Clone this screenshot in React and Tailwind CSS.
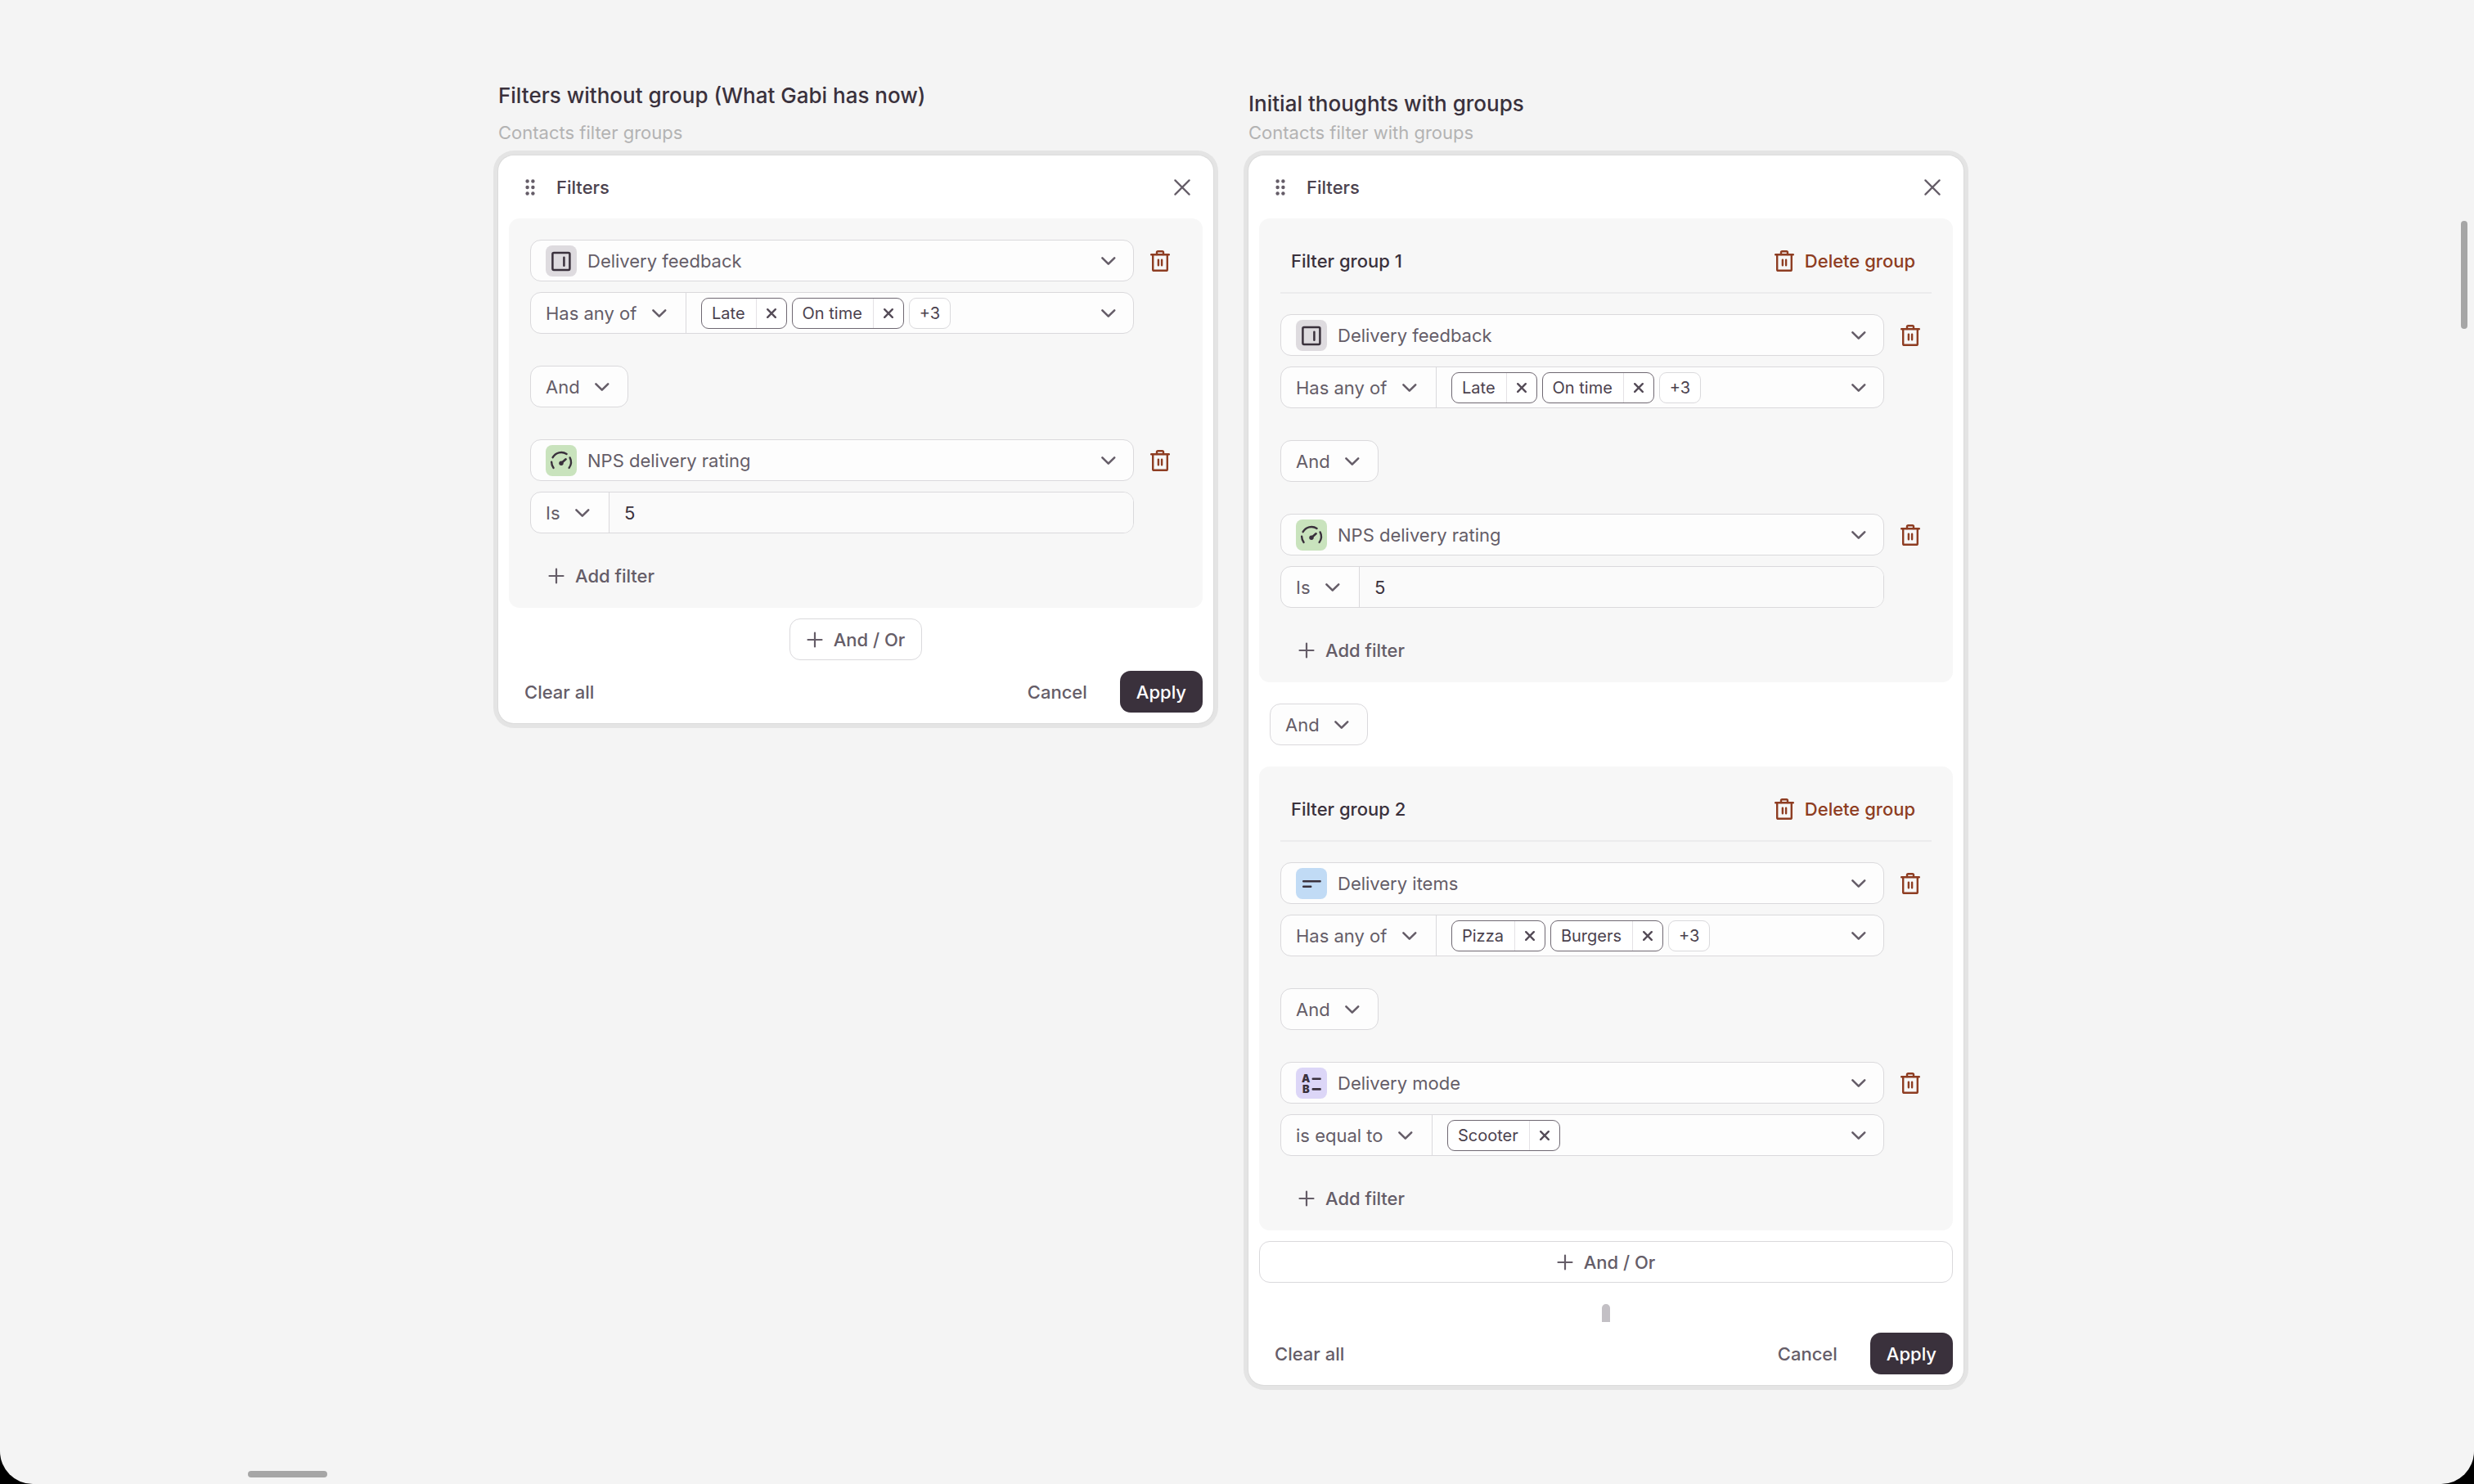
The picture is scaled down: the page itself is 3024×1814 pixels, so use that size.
import React, { useState } from 'react';

const ChevronIcon = () => (
  <svg className="pointer-events-none size-6 shrink-0" viewBox="0 0 24 24" fill="none" stroke="#655d68" strokeWidth="2.6" strokeLinecap="round" strokeLinejoin="round">
    <path d="M4.4 8.4l7.4 7.2 7.4-7.2" />
  </svg>
);

const PlusIcon = () => (
  <svg className="size-5 shrink-0" viewBox="0 0 20 20" fill="none" stroke="#655d68" strokeWidth="2.2" strokeLinecap="round">
    <path d="M10 1.5v17M1.5 10h17" />
  </svg>
);

const CloseIcon = () => (
  <svg className="size-5 shrink-0" viewBox="0 0 20 20" fill="none" stroke="#655d68" strokeWidth="2.2" strokeLinecap="round">
    <path d="M1.4 1.4l17.2 17.2M18.6 1.4L1.4 18.6" />
  </svg>
);

const SmallCloseIcon = () => (
  <svg className="size-3 shrink-0" viewBox="0 0 12 12" fill="none" stroke="#554c58" strokeWidth="2.4" strokeLinecap="round">
    <path d="M1.2 1.2l9.6 9.6M10.8 1.2l-9.6 9.6" />
  </svg>
);

const TrashIcon = () => (
  <svg className="h-[26px] w-6 shrink-0" viewBox="0 0 24 26" fill="none" stroke="#8e3d22" strokeWidth="2.4" strokeLinecap="round" strokeLinejoin="round">
    <path d="M1.2 5.2h21.6" />
    <path d="M8 5V2.6c0-.8.6-1.4 1.4-1.4h5.2c.8 0 1.4.6 1.4 1.4V5" />
    <path d="M3.2 5.2v18.2c0 .8.6 1.4 1.4 1.4h14.8c.8 0 1.4-.6 1.4-1.4V5.2" />
    <path d="M9.9 11.6v6.6M14.1 11.6v6.6" />
  </svg>
);

const DragIcon = () => (
  <svg className="h-5 w-3 shrink-0" viewBox="0 0 12 20" fill="#655d68">
    <circle cx="2.6" cy="2.5" r="2.2" />
    <circle cx="9.4" cy="2.5" r="2.2" />
    <circle cx="2.6" cy="10" r="2.2" />
    <circle cx="9.4" cy="10" r="2.2" />
    <circle cx="2.6" cy="17.5" r="2.2" />
    <circle cx="9.4" cy="17.5" r="2.2" />
  </svg>
);

// Coloured 38px tiles that show the type of a field
const fieldIcons = {
  panel: (
    <svg className="size-[38px] shrink-0 rounded-lg bg-[#dedbdf]" viewBox="0 0 38 38" fill="none" stroke="#3a313c" strokeWidth="2.5" strokeLinecap="round" strokeLinejoin="round">
      <rect x="8.4" y="8.9" width="21" height="21" rx="1.6" />
      <path d="M22.4 14.8v10" />
    </svg>
  ),
  gauge: (
    <svg className="size-[38px] shrink-0 rounded-lg bg-[#c9e3bd]" viewBox="0 0 38 38" fill="none" stroke="#3a313c" strokeWidth="2.4" strokeLinecap="round">
      <path d="M8.6 15.2A12 12 0 0 1 25.6 10.9" />
      <path d="M7.1 20.6A12 12 0 0 0 9.6 27.9" />
      <path d="M29.6 15.4A12 12 0 0 1 28.6 27.9" />
      <path d="M19 22.3l5.6-5" strokeWidth="2.6" />
      <circle cx="19" cy="22.3" r="2.7" fill="#3a313c" stroke="none" />
    </svg>
  ),
  text: (
    <svg className="size-[38px] shrink-0 rounded-lg bg-[#c1dbf5]" viewBox="0 0 38 38" fill="none" stroke="#3a313c" strokeWidth="2.5" strokeLinecap="round">
      <path d="M9.2 16.3h20.4M9.2 22.7h9" />
    </svg>
  ),
  choice: (
    <svg className="size-[38px] shrink-0 rounded-lg bg-[#dcd6f7]" viewBox="0 0 38 38" fill="none" stroke="#3a313c" strokeWidth="2.6" strokeLinecap="round">
      <path d="M20.8 13.8h8.8M20.8 26.4h8.8" />
      <g className="font-[Inter,sans-serif] text-[13px] font-black" fill="#3a313c" stroke="none" textAnchor="middle">
        <text x="12.2" y="18">A</text>
        <text x="12.4" y="31">B</text>
      </g>
    </svg>
  ),
};

const Select = ({ label, value, className = '' }) => (
  <select
    aria-label={label}
    defaultValue={value}
    className={`h-full cursor-pointer appearance-none bg-transparent text-[#655d68] outline-none ${className}`}
  >
    <option>{value}</option>
  </select>
);

const Conjunction = () => (
  <div className="flex h-[51px] w-fit items-center gap-[15px] rounded-[13px] border border-[#dad9dc] bg-[#fdfdfd] pr-[19px] pl-[18px]">
    <Select label="Combine with" value="And" />
    <ChevronIcon />
  </div>
);

const Chip = ({ label, onRemove }) => (
  <span className="flex h-[38px] items-stretch rounded-[9px] border border-[#6f6872] bg-white text-[20px] text-[#4b424e]">
    <span className="flex items-center pr-[13px] pl-3">{label}</span>
    <button aria-label={`Remove ${label}`} onClick={onRemove} className="flex w-[37px] items-center justify-center border-l border-[#e4e2e5]">
      <SmallCloseIcon />
    </button>
  </span>
);

const ChipField = ({ initial, more }) => {
  const [chips, setChips] = useState(initial);

  return (
    <div className="flex flex-1 items-center gap-1.5 px-[18px]">
      {chips.map((chip) => (
        <Chip key={chip} label={chip} onRemove={() => setChips(chips.filter((c) => c !== chip))} />
      ))}
      {more && (
        <span className="flex h-[38px] items-center rounded-[9px] border border-[#dad9dc] bg-white px-3 text-[20px] text-[#4b424e]">{more}</span>
      )}
      <button aria-label="Choose values" className="ml-auto">
        <ChevronIcon />
      </button>
    </div>
  );
};

const FilterRule = ({ icon, field, operator, chips, more, value }) => (
  <div className="flex items-start gap-1.5">
    <div className="flex flex-1 flex-col gap-[13px]">
      <div className="flex h-[51px] items-center gap-[13px] rounded-[13px] border border-[#dad9dc] bg-[#fdfdfd] px-[18px]">
        {fieldIcons[icon]}
        <Select label="Field" value={field} className="flex-1" />
        <ChevronIcon />
      </div>
      <div className="flex h-[51px] overflow-hidden rounded-[13px] border border-[#dad9dc] bg-[#fdfdfd]">
        <div className="flex items-center gap-[15px] border-r border-[#dad9dc] pr-5 pl-[18px]">
          <Select label="Condition" value={operator} />
          <ChevronIcon />
        </div>
        {chips ? (
          <ChipField initial={chips} more={more} />
        ) : (
          <input
            aria-label="Value"
            defaultValue={value}
            className="min-w-0 flex-1 bg-[#fafafa] px-[18px] text-[#3a313c] outline-none"
          />
        )}
      </div>
    </div>
    <button aria-label="Delete filter" className="flex h-[51px] w-[52px] items-center justify-center">
      <TrashIcon />
    </button>
  </div>
);

const FilterGroup = ({ name, rules }) => (
  <section className="rounded-[13px] bg-[#f7f7f7] px-[26px] pt-[26px] pb-3.5">
    {name && (
      <div className="mb-[25px] flex h-[66px] items-start justify-between border-b-2 border-[#ececed] pr-5 pl-[13px]">
        <h3 className="flex h-[51px] items-center font-medium text-[#3a313c]">{name}</h3>
        <button className="flex h-[51px] items-center gap-[13px] font-medium text-[#8e3d22]">
          <TrashIcon />
          Delete group
        </button>
      </div>
    )}
    <div className="flex flex-col gap-[39px]">
      {rules.map((rule, i) => (
        <React.Fragment key={rule.field}>
          {i > 0 && <Conjunction />}
          <FilterRule {...rule} />
        </React.Fragment>
      ))}
    </div>
    <button className="mt-[26px] flex h-[51px] items-center gap-[13px] px-[22px] font-medium text-[#655d68]">
      <PlusIcon />
      Add filter
    </button>
  </section>
);

const Panel = ({ groups, wide }) => (
  <div className="rounded-[19px] bg-white px-[13px] pb-[13px] shadow-[0_0_0_1px_#dbdbdb,0_0_0_6px_#e4e4e4]">
    <div className="flex h-[77px] items-center gap-[26px] pr-[15px] pl-5">
      <DragIcon />
      <h2 className="flex-1 font-medium text-[#4b424e]">Filters</h2>
      <button aria-label="Close">
        <CloseIcon />
      </button>
    </div>

    <div className="flex flex-col gap-[26px]">
      {groups.map((group, i) => (
        <React.Fragment key={i}>
          {i > 0 && (
            <div className="pl-[13px]">
              <Conjunction />
            </div>
          )}
          <FilterGroup {...group} />
        </React.Fragment>
      ))}
    </div>

    <button
      className={`mx-auto mt-[13px] flex h-[51px] items-center justify-center gap-[13px] rounded-[13px] border border-[#dad9dc] px-5 font-medium text-[#655d68] ${
        wide ? 'w-full' : ''
      }`}
    >
      <PlusIcon />
      And / Or
    </button>

    {/* Resize handle */}
    {wide && <div className="mx-auto mt-[26px] h-[22px] w-2.5 rounded-t-[5px] bg-[#c3c0c5]" />}

    <div className="mt-[13px] flex h-[51px] items-center font-medium text-[#655d68]">
      <button className="px-[19px]">Clear all</button>
      <button className="ml-auto px-5">Cancel</button>
      <button className="ml-5 h-full rounded-[13px] bg-[#3a313c] px-5 text-white">Apply</button>
    </div>
  </div>
);

const deliveryRules = [
  { icon: 'panel', field: 'Delivery feedback', operator: 'Has any of', chips: ['Late', 'On time'], more: '+3' },
  { icon: 'gauge', field: 'NPS delivery rating', operator: 'Is', value: '5' },
];

const orderRules = [
  { icon: 'text', field: 'Delivery items', operator: 'Has any of', chips: ['Pizza', 'Burgers'], more: '+3' },
  { icon: 'choice', field: 'Delivery mode', operator: 'is equal to', chips: ['Scooter'] },
];

const App = () => {
  return (
    <div className="min-h-screen bg-black font-[Inter,sans-serif] text-[22px] leading-7">
      <main className="relative min-h-screen rounded-b-[40px] bg-[#f4f4f4] pr-[15px] pb-[120px]">
        <div className="mx-auto grid max-w-[1791px] grid-cols-1 items-start gap-[43px] lg:grid-cols-2">
          <article>
            <header className="flex h-[190px] flex-col justify-end gap-[15px] pb-3.5">
              <h1 className="text-[26px] leading-8 font-medium text-[#3a313c]">Filters without group (What Gabi has now)</h1>
              <p className="text-[#b3b3b3]">Contacts filter groups</p>
            </header>
            <Panel groups={[{ rules: deliveryRules }]} />
          </article>
          <article>
            <header className="flex h-[190px] flex-col justify-end gap-[5px] pb-3.5">
              <h1 className="text-[26px] leading-8 font-medium text-[#3a313c]">Initial thoughts with groups</h1>
              <p className="text-[#b3b3b3]">Contacts filter with groups</p>
            </header>
            <Panel
              wide
              groups={[
                { name: 'Filter group 1', rules: deliveryRules },
                { name: 'Filter group 2', rules: orderRules },
              ]}
            />
          </article>
        </div>

        {/* Canvas scrollbars */}
        <div className="absolute top-[270px] right-2 h-[132px] w-2 rounded-full bg-[#a6a6a6]" />
        <div className="absolute bottom-2 left-[303px] h-2 w-[97px] rounded-full bg-[#a6a6a6]" />
      </main>
    </div>
  );
};

export default App;
